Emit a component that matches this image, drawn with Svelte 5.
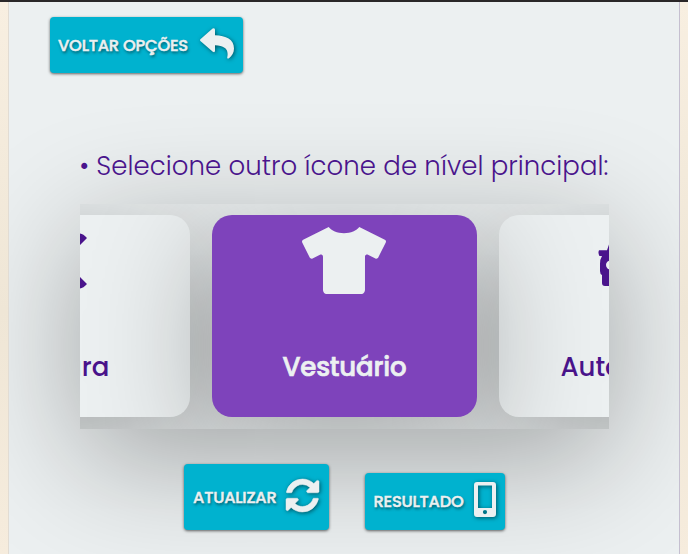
<script>
  const cards = [
    { label: 'Costura', icon: 'cut' },
    { label: 'Vestuário', icon: 'shirt', active: true },
    { label: 'Automóvel', icon: 'car' }
  ];
</script>

<div class="page">
  <main>
    <button class="back"><span class="back-label">VOLTAR OPÇÕES</span>
      <svg class="reply" viewBox="0 0 34 31"><path d="M.4 11.2 12.6.6Q15-.6 15 2V7.3C26 7.5 34 11.5 34 20.5C34 24.5 32 28 29 30.3Q27.2 31.2 27.2 29.4C29 21.5 25 17.5 15 17.2V22.6Q15 25 12.8 23.8L.4 13Q-.4 12.1.4 11.2Z"/></svg>
    </button>
    <h2><span>• Selecione outro ícone de nível principal:</span></h2>
    <section class="carousel">
      <div class="track">
        {#each cards as card}
          <article class:active={card.active} class={card.icon}>
            <div class="pic">
              {#if card.icon === 'shirt'}
                <svg width="84" height="67.2" viewBox="0 0 640 512"><path d="M631.2 96.5L436.5 0C416.4 27.8 371.9 47.2 320 47.2S223.6 27.8 203.5 0L8.8 96.5c-7.9 4-11.1 13.6-7.2 21.5l57.2 114.5c4 7.9 13.6 11.1 21.5 7.2l56.6-27.7c10.6-5.2 23 2.5 23 14.4V480c0 17.7 14.3 32 32 32h256c17.7 0 32-14.3 32-32V226c0-11.8 12.4-19.6 23-14.4l56.6 27.7c7.9 4 17.5.8 21.5-7.2L638.3 118c4-7.9.8-17.6-7.1-21.5z"/></svg>
              {:else if card.icon === 'cut'}
                <svg width="60" height="56" viewBox="0 0 60 56"><path d="M22 28 47 3Q53-3 60 5L22 43ZM22 13 60 51Q53 59 47 53L22 28Z"/><circle cx="12" cy="12" r="11"/><circle cx="12" cy="44" r="11"/></svg>
              {:else}
                <svg width="68" height="56" viewBox="0 0 68 56"><path fill-rule="evenodd" d="M1 17.3H9L11.5 10Q13 5 19 5H49Q55 5 56.5 10L59 17.3H67Q68.3 20 66.5 23H64Q66 26 66 31V38Q66 41 64 42V50Q64 53 61 53H57Q54 53 54 50V45H14V50Q14 53 11 53H7Q4 53 4 50V42Q2 41 2 38V31Q2 26 4 23H1.5Q-.3 20 1 17.3ZM12.5 27.5A4.5 4.5 0 1 0 12.5 36.5A4.5 4.5 0 1 0 12.5 27.5ZM55.5 27.5A4.5 4.5 0 1 0 55.5 36.5A4.5 4.5 0 1 0 55.5 27.5Z"/></svg>
              {/if}
            </div>
            <strong>{card.label}</strong>
          </article>
        {/each}
      </div>
    </section>
    <div class="actions">
      <button class="update"><span class="update-label">ATUALIZAR</span>
        <svg class="sync" viewBox="0 0 1536 1536"><path stroke="#ecf0f1" stroke-width="24" d="M1511 928q0 5-1 7-64 268-268 434.500t-478 166.500q-146 0-282.500-55t-243.500-157l-129 129q-19 19-45 19t-45-19-19-45v-448q0-26 19-45t45-19h448q26 0 45 19t19 45-19 45l-137 137q71 66 161 102t187 36q134 0 250-65t186-179q11-17 53-117 8-23 30-23h192q13 0 22.500 9.500t9.500 22.500zm25-800v448q0 26-19 45t-45 19h-448q-26 0-45-19t-19-45 19-45l138-138q-148-137-349-137-134 0-250 65t-186 179q-11 17-53 117-8 23-30 23h-199q-13 0-22.500-9.500t-9.500-22.500v-7q65-268 270-434.500t480-166.500q146 0 284 55.500t245 156.500l130-129q19-19 45-19t45 19 19 45z"/></svg>
      </button>
      <button class="result"><span class="result-label">RESULTADO</span>
        <svg class="mobile" viewBox="0 0 22 35"><path fill-rule="evenodd" d="M3 0H19Q22 0 22 3V32Q22 35 19 35H3Q0 35 0 32V3Q0 0 3 0ZM4 3.400V26H18V3.400ZM11 28A2.100 2.100 0 1 0 11 32.200A2.100 2.100 0 1 0 11 28Z"/></svg>
      </button>
    </div>
  </main>
</div>

<style>
  :global(body) { margin: 0; }
  .page { box-sizing: border-box; width: 688px; height: 554px; overflow: hidden; border-top: 2px solid #2a2728; padding: 0 8px; background: linear-gradient(#f8efe1, #efe6d6 56%, #f6ecdd); font-family: Poppins, Inter, sans-serif; }
  main { box-sizing: border-box; width: 672px; height: 552px; overflow: hidden; border-left: 1px solid #e2dcd3; border-right: 1px solid #c5bfd0; background: #ecf0f1; padding: 15px 70px 0 70.5px; display: flex; flex-direction: column; }
  button { box-sizing: border-box; border: 0; border-radius: 4px; background: #00b2cf; color: #ecf0f1; box-shadow: 0 1px 3px #0009; display: flex; align-items: center; padding: 0 9px; font: 500 16.3px Poppins, Inter, sans-serif; letter-spacing: -.2px; -webkit-text-stroke: .5px #ecf0f1; text-shadow: 1px 2px 3px #0008; white-space: nowrap; flex: none; }
  button svg { fill: #ecf0f1; filter: drop-shadow(1px 1px 2px #0008); flex: none; overflow: visible; }
  button span { display: block; text-align: left; }
  .back { width: 193.5px; height: 56px; margin-left: -30px; padding-left: 8.5px; }
  .back-label { width: 142.5px; }
  .reply { width: 34px; height: 31px; margin-top: -3px; }
  h2 { margin: 71px 0 0; height: 60px; line-height: 45px; font-size: 26px; font-weight: 300; color: #4a148c; white-space: nowrap; letter-spacing: .07px; }
  .carousel { width: 529.5px; height: 225px; flex: none; overflow: hidden; background: #ecf0f1; box-shadow: 0 30px 125px rgba(0,0,0,.32); }
  h2, .back, .actions { position: relative; z-index: 1; }
  .track { display: flex; gap: 22.4px; margin: 10.6px 0 0 -155px; width: 845px; }
  article { box-sizing: border-box; width: 265px; height: 202.600px; border-radius: 20px; background: #ecf0f1; color: #4a148c; fill: #4a148c; box-shadow: 0 30px 125px rgba(0,0,0,.32); display: flex; flex-direction: column; align-items: center; flex: none; }
  .active { background: #7e43bb; color: #ecf0f1; fill: #ecf0f1; position: relative; z-index: 1; }
  .pic { height: 121.5px; padding-top: 12px; }
  .cut .pic, .car .pic { height: 115.5px; padding-top: 18px; }
  svg { display: block; }
  strong { font-size: 26px; line-height: 38px; font-weight: 500; }
  .active strong { letter-spacing: -.2px; -webkit-text-stroke: .7px #ecf0f1; }
  .actions { display: flex; align-items: flex-end; height: 66px; margin: 35px 0 0 104.5px; gap: 36px; }
  .update { width: 144.5px; height: 66px; }
  .update-label { width: 93px; }
  .sync { width: 33px; height: 33px; margin-top: -4px; }
  .result { width: 140.500px; height: 57px; }
  .result-label { width: 101px; }
  .mobile { width: 22px; height: 35px; margin-top: -5px; }
</style>
